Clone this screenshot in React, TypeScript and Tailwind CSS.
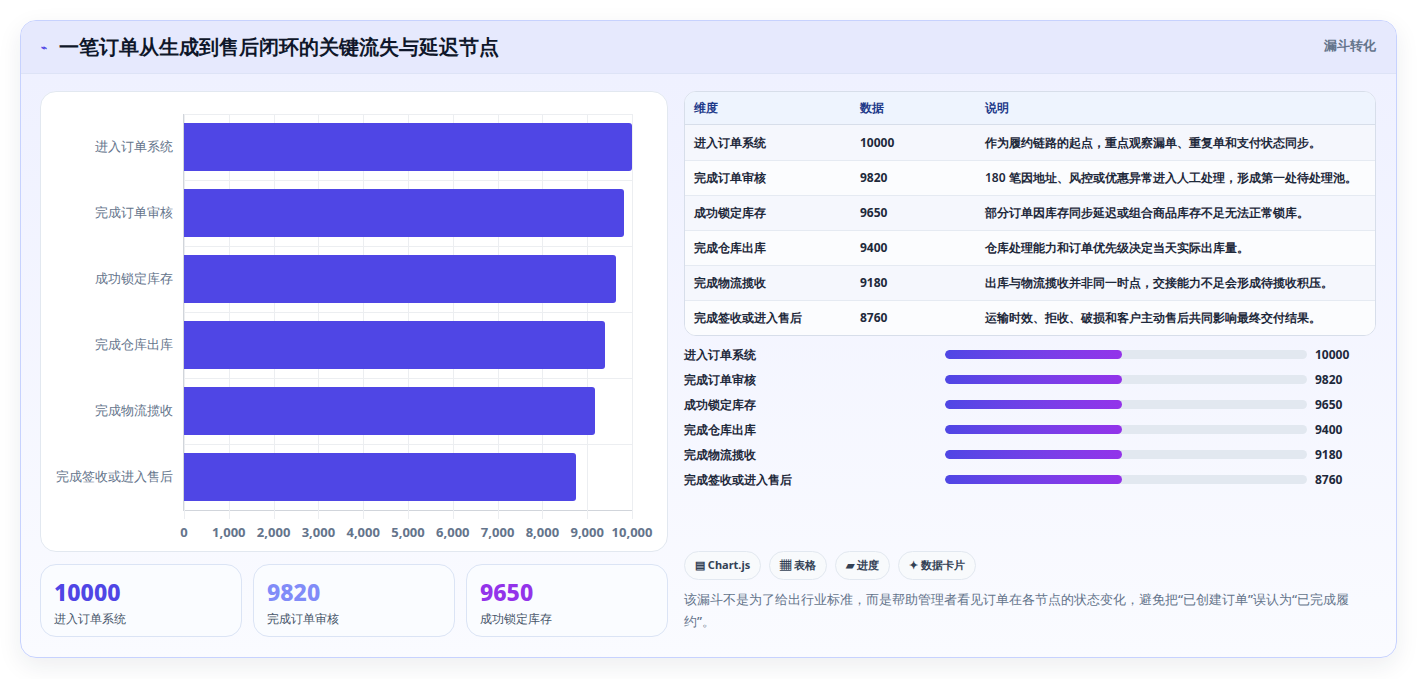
import React from 'react';

const rows = [
    { name: '进入订单系统', value: 10000, note: '作为履约链路的起点，重点观察漏单、重复单和支付状态同步。' },
    { name: '完成订单审核', value: 9820, note: '180 笔因地址、风控或优惠异常进入人工处理，形成第一处待处理池。' },
    { name: '成功锁定库存', value: 9650, note: '部分订单因库存同步延迟或组合商品库存不足无法正常锁库。' },
    { name: '完成仓库出库', value: 9400, note: '仓库处理能力和订单优先级决定当天实际出库量。' },
    { name: '完成物流揽收', value: 9180, note: '出库与物流揽收并非同一时点，交接能力不足会形成待揽收积压。' },
    { name: '完成签收或进入售后', value: 8760, note: '运输时效、拒收、破损和客户主动售后共同影响最终交付结果。' },
];

const ticks = ['0', '1,000', '2,000', '3,000', '4,000', '5,000', '6,000', '7,000', '8,000', '9,000', '10,000'];

export default function App() {
    return (
        <div className="min-h-screen bg-white p-5 font-['Noto_Sans_CJK_SC','Noto_Sans',sans-serif]">
            <div className="w-[1377px] h-[638px] rounded-2xl border border-[#c7d2fe] bg-gradient-to-b from-[#eef0ff] to-[#fafbff] shadow-[0_8px_24px_rgba(30,41,59,0.08)] overflow-hidden flex flex-col">
                {/* header */}
                <div className="h-[55px] flex items-center justify-between px-5 bg-[#e6e9fd] border-b border-[#dde3f6]">
                    <h1 className="flex items-center gap-3 text-[20px] font-bold text-[#0f172a]">
                        <span className="text-[10px] text-[#4f46e5]">⌁</span>
                        一笔订单从生成到售后闭环的关键流失与延迟节点
                    </h1>
                    <span className="text-[13px] font-bold text-[#64748b] self-start mt-[15px]">漏斗转化</span>
                </div>

                <div className="flex-1 flex gap-4 pl-[19px] pr-5 pt-[17px] pb-5">
                    {/* left */}
                    <div className="w-[628px] flex flex-col gap-3">
                        <div className="h-[461px] rounded-2xl bg-white border border-[#e2e8f0] pl-3 pr-[35px] pt-[22px]">
                            <div className="flex">
                                <div className="w-[130px] flex flex-col">
                                    {rows.map((r) => (
                                        <div key={r.name} className="h-[66px] flex items-center justify-end pr-[10px] text-[13px] text-[#64748b]">
                                            {r.name}
                                        </div>
                                    ))}
                                </div>
                                <div className="relative flex-1 h-[397px] border-l border-b border-[#d1d5db]">
                                    {ticks.map((t, i) => (
                                        <div key={t} className="absolute top-0 h-[405px] w-px bg-[#eceef1]" style={{ left: `${i * 10}%` }} />
                                    ))}
                                    {rows.map((_, i) => (
                                        <div key={i} className="absolute left-0 right-0 h-px bg-[#eceef1]" style={{ top: `${i * 66}px` }} />
                                    ))}
                                    <div className="relative flex flex-col">
                                        {rows.map((r) => (
                                            <div key={r.name} className="h-[66px] flex items-center">
                                                <div className="h-[48px] bg-[#4f46e5] rounded-r-[3px]" style={{ width: `${r.value / 100}%` }} />
                                            </div>
                                        ))}
                                    </div>
                                    <div className="absolute left-0 right-0 top-[409px]">
                                        {ticks.map((t, i) => (
                                            <span key={t} className="absolute -translate-x-1/2 text-[13px] font-bold text-[#64748b] font-['Liberation_Sans',sans-serif]" style={{ left: `${i * 10}%` }}>
                                                {t}
                                            </span>
                                        ))}
                                    </div>
                                </div>
                            </div>
                        </div>
                        <div className="grid grid-cols-3 gap-[11px]">
                            {[
                                { v: '10000', l: '进入订单系统', c: 'text-[#4f46e5]' },
                                { v: '9820', l: '完成订单审核', c: 'text-[#818cf8]' },
                                { v: '9650', l: '成功锁定库存', c: 'text-[#9333ea]' },
                            ].map((k) => (
                                <div key={k.v} className="h-[73px] rounded-2xl border border-[#dbe4f5] bg-[#fafcff] px-[13px] pt-[11px]">
                                    <div className={`text-[23px] font-extrabold leading-8 ${k.c}`}>{k.v}</div>
                                    <div className="text-[12px] text-[#475569] mt-[2px]">{k.l}</div>
                                </div>
                            ))}
                        </div>
                    </div>

                    {/* right */}
                    <div className="flex-1 flex flex-col">
                        <div className="rounded-xl border border-[#d7deea] overflow-hidden bg-white">
                            <div className="flex h-[33px] items-center bg-[#eef4fe] border-b border-[#d7deea] text-[12px] font-bold text-[#1e3a8a] px-[9px]">
                                <div className="w-[166px]">维度</div>
                                <div className="w-[125px]">数据</div>
                                <div>说明</div>
                            </div>
                            {rows.map((r, i) => (
                                <div key={r.name} className={`flex h-[35px] items-center px-[9px] text-[12px] font-semibold text-[#1e293b] ${i > 0 ? 'border-t border-[#e5eaf2]' : ''} ${i % 2 === 0 ? 'bg-[#f5f7fd]' : 'bg-[#fbfcfe]'}`}>
                                    <div className="w-[166px]">{r.name}</div>
                                    <div className="w-[125px] font-['Liberation_Sans',sans-serif] font-bold">{r.value}</div>
                                    <div>{r.note}</div>
                                </div>
                            ))}
                        </div>

                        <div className="flex flex-col mt-[6px]">
                            {rows.map((r) => (
                                <div key={r.name} className="h-[25px] flex items-center text-[12px] font-semibold text-[#1e293b]">
                                    <div className="w-[261px]">{r.name}</div>
                                    <div className="w-[362px] h-[9px] rounded-full bg-[#e2e8f0] overflow-hidden">
                                        <div className="h-full w-[177px] rounded-full bg-gradient-to-r from-[#4f46e5] to-[#9333ea]" />
                                    </div>
                                    <div className="ml-2 font-bold font-['Liberation_Sans',sans-serif]">{r.value}</div>
                                </div>
                            ))}
                        </div>

                        <div className="mt-auto pb-[5px]">
                            <div className="flex gap-2 mb-[8px]">
                                {['▤ Chart.js', '▦ 表格', '▰ 进度', '✦ 数据卡片'].map((c) => (
                                    <span key={c} className="h-[29px] flex items-center px-[10px] rounded-full border border-[#e2e8f0] bg-[#f8fafc] text-[11px] font-bold text-[#334155]">
                                        {c}
                                    </span>
                                ))}
                            </div>
                            <p className="text-[13px] leading-[22px] text-[#64748b] font-medium">
                                该漏斗不是为了给出行业标准，而是帮助管理者看见订单在各节点的状态变化，避免把“已创建订单”误认为“已完成履约”。
                            </p>
                        </div>
                    </div>
                </div>
            </div>
        </div>
    );
}
